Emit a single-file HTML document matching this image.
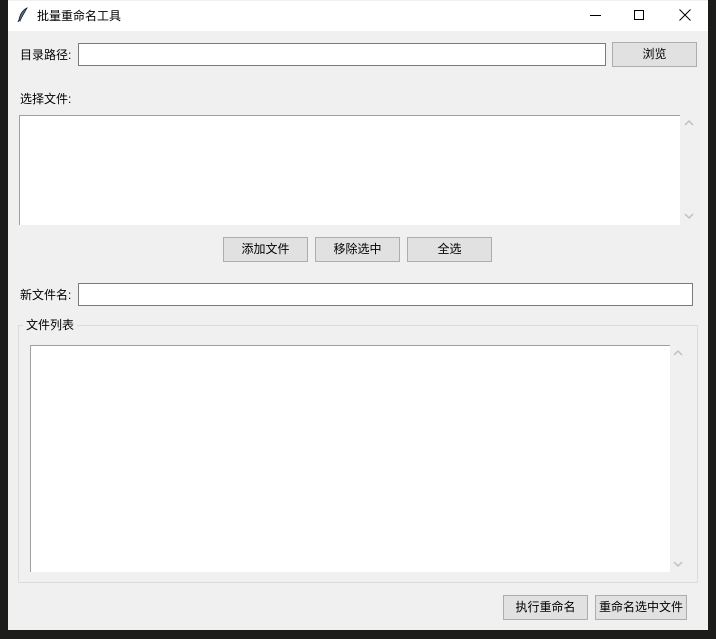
<!DOCTYPE html>
<html><head><meta charset="utf-8"><style>
*{margin:0;padding:0;box-sizing:border-box}
body{width:716px;height:639px;background:#1c1c1a;position:relative;overflow:hidden;font-family:"Liberation Sans","Microsoft YaHei","Noto Sans CJK SC",sans-serif;font-size:12px;color:#000}
.a{position:absolute}
#win{left:8px;top:0;width:700px;height:630px;background:#f0f0f0}
#title{left:8px;top:1px;width:700px;height:30px;background:#fff}
.lbl{position:absolute;font-size:12px;line-height:14px;white-space:nowrap}
.ent{position:absolute;background:#fff;border:1px solid #7a7a7a}
.btn{position:absolute;background:#e1e1e1;border:1px solid #adadad;text-align:center;font-size:12px;line-height:23px}
.lb{position:absolute;background:#fff;border-top:1px solid #a0a0a0;border-left:1px solid #a0a0a0}
.sb{position:absolute}
</style></head><body>
<div class="a" id="win"></div>
<div class="a" id="title"></div>
<svg class="a" style="left:17px;top:7px" width="12" height="16" viewBox="0 0 12 16"><path d="M10 1 C6 3 3 7 2 13 L3 14 C5 9 8 5 10 1Z" fill="#4a6fa0" stroke="#222" stroke-width="0.8"/><path d="M2 13 L1 15" stroke="#222"/></svg>
<div class="lbl" style="left:37px;top:9px">批量重命名工具</div>
<div class="a" style="left:590px;top:15px;width:11px;height:1px;background:#000"></div>
<div class="a" style="left:634px;top:10px;width:10px;height:10px;border:1px solid #000"></div>
<svg class="a" style="left:679px;top:9px" width="12" height="12"><path d="M0.5 0.5 L11.5 11.5 M11.5 0.5 L0.5 11.5" stroke="#000" stroke-width="1"/></svg>

<div class="lbl" style="left:20px;top:48px">目录路径:</div>
<div class="ent" style="left:78px;top:43px;width:528px;height:23px"></div>
<div class="btn" style="left:612px;top:42px;width:85px;height:25px">浏览</div>

<div class="lbl" style="left:20px;top:92px">选择文件:</div>
<div class="lb" style="left:19px;top:115px;width:661px;height:110px"></div>
<svg class="sb" style="left:684px;top:119px" width="10" height="8"><path d="M1 6 L5 2 L9 6" stroke="#c0c0c0" stroke-width="1.5" fill="none"/></svg>
<svg class="sb" style="left:684px;top:212px" width="10" height="8"><path d="M1 2 L5 6 L9 2" stroke="#c0c0c0" stroke-width="1.5" fill="none"/></svg>

<div class="btn" style="left:223px;top:237px;width:85px;height:25px">添加文件</div>
<div class="btn" style="left:315px;top:237px;width:85px;height:25px">移除选中</div>
<div class="btn" style="left:407px;top:237px;width:85px;height:25px">全选</div>

<div class="lbl" style="left:20px;top:288px">新文件名:</div>
<div class="ent" style="left:78px;top:283px;width:615px;height:23px"></div>

<div class="a" style="left:18px;top:325px;width:680px;height:258px;border:1px solid #dcdcdc"></div>
<div class="lbl" style="left:23px;top:318px;background:#f0f0f0;padding:0 3px">文件列表</div>
<div class="lb" style="left:30px;top:345px;width:640px;height:227px"></div>
<svg class="sb" style="left:673px;top:349px" width="10" height="8"><path d="M1 6 L5 2 L9 6" stroke="#c0c0c0" stroke-width="1.5" fill="none"/></svg>
<svg class="sb" style="left:673px;top:560px" width="10" height="8"><path d="M1 2 L5 6 L9 2" stroke="#c0c0c0" stroke-width="1.5" fill="none"/></svg>

<div class="btn" style="left:503px;top:595px;width:85px;height:25px">执行重命名</div>
<div class="btn" style="left:595px;top:595px;width:92px;height:25px">重命名选中文件</div>
</body></html>
